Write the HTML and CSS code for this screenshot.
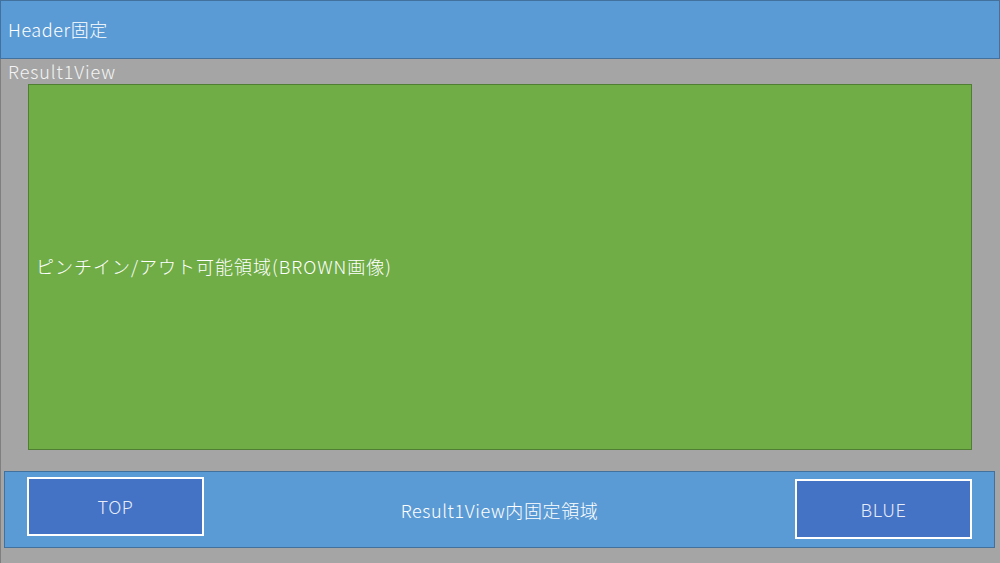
FILE: index.html
```html
<!DOCTYPE html>
<html lang="ja">
<head>
<meta charset="utf-8">
<link rel="stylesheet" href="styles.css">
</head>
<body>
<div class="page">
  <header class="header">Header固定</header>
  <main class="view">
    <div class="view-label">Result1View</div>
    <div class="canvas">ピンチイン/アウト可能領域(BROWN画像)</div>
    <div class="fixed-bar">
      <div class="btn btn-top">TOP</div>
      <div class="bar-text">Result1View内固定領域</div>
      <div class="btn btn-blue">BLUE</div>
    </div>
  </main>
</div>
</body>
</html>
```
FILE: styles.css
```css
html, body {
  margin: 0;
  padding: 0;
}
body {
  width: 1000px;
  height: 563px;
  overflow: hidden;
  font-family: "Noto Sans CJK JP", "Noto Sans", sans-serif;
  font-size: 18px;
  font-weight: 300;
  letter-spacing: 0.6px;
  color: #ffffff;
  background: #a5a5a5;
}
.page {
  display: flex;
  flex-direction: column;
  height: 563px;
}
.header {
  box-sizing: border-box;
  height: 59px;
  background: #5b9bd5;
  border: 1px solid #41719c;
  display: flex;
  align-items: center;
  padding-left: 7px;
  padding-bottom: 2px;
}
.view {
  flex: 1;
  box-sizing: border-box;
  background: #a5a5a5;
  border-left: 1px solid #7f7f7f;
  display: flex;
  flex-direction: column;
}
.view-label {
  height: 25px;
  line-height: 25px;
  padding-left: 7px;
  color: #f4f4f4;
  letter-spacing: 0.9px;
}
.canvas {
  box-sizing: border-box;
  margin-left: 27px;
  width: 944px;
  height: 366px;
  background: #70ad47;
  border: 1px solid #507e32;
  display: flex;
  align-items: center;
  padding-left: 7px;
  padding-bottom: 2px;
  letter-spacing: 1px;
}
.fixed-bar {
  box-sizing: border-box;
  margin-top: 21px;
  margin-left: 3px;
  width: 991px;
  height: 77px;
  background: #5b9bd5;
  border: 1px solid #41719c;
  display: flex;
  align-items: flex-start;
  justify-content: space-between;
  padding: 5px 22px 0 22px;
}
.btn {
  box-sizing: border-box;
  width: 177px;
  height: 59px;
  background: #4472c4;
  border: 2px solid #ffffff;
  display: flex;
  align-items: center;
  justify-content: center;
  color: #e6ecf8;
  padding-bottom: 2px;
}
.btn-blue {
  margin-top: 2px;
  height: 60px;
  padding-bottom: 0;
}
.bar-text {
  align-self: center;
  padding-bottom: 4px;
}
```
